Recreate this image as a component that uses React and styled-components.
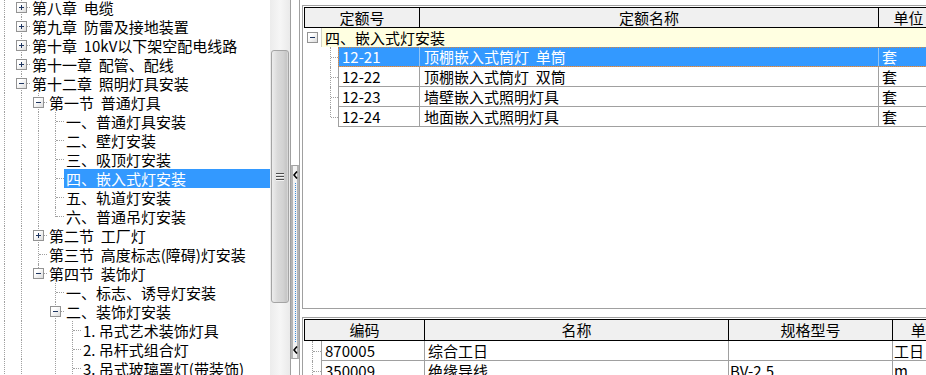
import React from 'react'
import styled, { createGlobalStyle, css } from 'styled-components'

const GlobalStyle = createGlobalStyle`
  html, body {
    margin: 0;
    padding: 0;
    background: #fff;
  }
  body {
    font-family: "Noto Sans CJK SC", "Noto Sans", sans-serif;
    font-size: 15px;
    color: #000;
    overflow: hidden;
  }
`

const tree = [
  { level: 1, text: '第八章  电缆', box: 'plus' },
  { level: 1, text: '第九章  防雷及接地装置', box: 'plus' },
  { level: 1, text: '第十章  10kV以下架空配电线路', box: 'plus' },
  { level: 1, text: '第十一章  配管、配线', box: 'plus' },
  { level: 1, text: '第十二章  照明灯具安装', box: 'minus' },
  { level: 2, text: '第一节  普通灯具', box: 'minus' },
  { level: 3, text: '一、普通灯具安装' },
  { level: 3, text: '二、壁灯安装' },
  { level: 3, text: '三、吸顶灯安装' },
  { level: 3, text: '四、嵌入式灯安装', selected: true },
  { level: 3, text: '五、轨道灯安装' },
  { level: 3, text: '六、普通吊灯安装' },
  { level: 2, text: '第二节  工厂灯', box: 'plus' },
  { level: 2, text: '第三节  高度标志(障碍)灯安装' },
  { level: 2, text: '第四节  装饰灯', box: 'minus' },
  { level: 3, text: '一、标志、诱导灯安装' },
  { level: 3, text: '二、装饰灯安装', box: 'minus' },
  { level: 4, text: '1. 吊式艺术装饰灯具' },
  { level: 4, text: '2. 吊杆式组合灯' },
  { level: 4, text: '3. 吊式玻璃罩灯(带装饰)' },
]

// levels that go on past the bottom of the visible list
const MORE_AFTER = { 0: true, 1: true, 2: false, 3: true, 4: true }

const hasLaterSibling = (i, level) => {
  for (let j = i + 1; j < tree.length; j++) {
    if (tree[j].level < level) return false
    if (tree[j].level === level) return true
  }
  return MORE_AFTER[level]
}

const quotaRows = [
  { code: '12-21', name: '顶棚嵌入式筒灯  单筒', unit: '套', selected: true },
  { code: '12-22', name: '顶棚嵌入式筒灯  双筒', unit: '套' },
  { code: '12-23', name: '墙壁嵌入式照明灯具', unit: '套' },
  { code: '12-24', name: '地面嵌入式照明灯具', unit: '套' },
]

const materialRows = [
  { code: '870005', name: '综合工日', spec: '', unit: '工日' },
  { code: '350009', name: '绝缘导线', spec: 'BV-2.5', unit: 'm' },
]

const Window = styled.div`
  display: flex;
  width: 926px;
  height: 375px;
  overflow: hidden;
  background: #fff;
`

/* ---------- tree ---------- */

const TreePane = styled.div`
  display: flex;
  flex: none;
  width: 290px;
  height: 100%;
`

const TreeView = styled.div`
  width: 270px;
  height: 100%;
  overflow: hidden;
  background: #fff;
`

const TreeList = styled.div`
  margin: -2px 0 0 -4px;
`

const TreeRow = styled.div`
  display: flex;
  height: 19px;
`

const dotted = '1px dotted #a0a0a0'

const Guide = styled.div`
  flex: none;
  width: 17px;
  position: relative;
  ${p => p.$line && css`
    &::before {
      content: '';
      position: absolute;
      left: 8px;
      top: 0;
      bottom: 0;
      border-left: ${dotted};
    }
  `}
`

const NodeCell = styled.div`
  flex: none;
  width: 17px;
  position: relative;
  &::before {
    content: '';
    position: absolute;
    left: 8px;
    top: 0;
    height: ${p => (p.$last ? '10px' : '19px')};
    border-left: ${dotted};
  }
  &::after {
    content: '';
    position: absolute;
    left: 9px;
    right: 0;
    top: 9px;
    border-top: ${dotted};
  }
`

const ExpandBox = styled.span`
  position: absolute;
  z-index: 1;
  left: ${p => p.$left ?? 3}px;
  top: ${p => p.$top ?? 4}px;
  width: 11px;
  height: 11px;
  box-sizing: border-box;
  border: 1px solid #939393;
  background: linear-gradient(135deg, #ffffff 30%, #dcdcdc);
  &::before {
    content: '';
    position: absolute;
    left: 2px;
    top: 4px;
    width: 5px;
    height: 1px;
    background: #1e3560;
  }
  ${p => p.$plus && css`
    &::after {
      content: '';
      position: absolute;
      left: 4px;
      top: 2px;
      width: 1px;
      height: 5px;
      background: #1e3560;
    }
  `}
`

const TreeLabel = styled.div`
  padding: 0 2px;
  line-height: 19px;
  white-space: pre;
  ${p => p.$selected && css`
    flex: 1;
    background: #3399ff;
    color: #fff;
  `}
`

/* ---------- tree scrollbar ---------- */

const ScrollTrack = styled.div`
  flex: none;
  width: 20px;
  height: 100%;
  box-sizing: border-box;
  padding-top: 50px;
  background: linear-gradient(to right, #ececec, #f6f6f6 50%, #eaeaea);
`

const Thumb = styled.div`
  height: 253px;
  margin: 0 1px 0 1px;
  box-sizing: border-box;
  border: 1px solid #a4a4a4;
  border-radius: 3px;
  background: linear-gradient(to right, #ededed, #dadada 35%, #d2d2d2 70%, #c6c6c6 90%, #dedede);
  display: flex;
  align-items: center;
  justify-content: center;
`

const Grip = styled.div`
  display: flex;
  flex-direction: column;
  gap: 2px;
  margin-left: -1px;
`

const GripLine = styled.div`
  width: 8px;
  height: 1px;
  background: #4e4e4e;
  box-shadow: 0 1px 0 #f4f4f4;
`

/* ---------- splitter ---------- */

const Splitter = styled.div`
  flex: none;
  width: 10px;
  height: 100%;
  box-sizing: border-box;
  border-left: 1px solid #a0a0a0;
  border-right: 1px solid #a0a0a0;
  background: #fff;
`

const SplitHandle = styled.div`
  margin-top: 165px;
  height: 194px;
  box-sizing: border-box;
  border-style: solid;
  border-width: 1px 2px;
  border-color: #a0a0a0 #b4b4b4;
  background: #f2f2f2;
  display: flex;
  flex-direction: column;
  align-items: center;
  padding: 5px 0 4px;
`

const BlueDots = styled.div`
  flex: 1;
  margin: 4px 0;
  border-left: 1px dotted #3a8de0;
`

const Chevron = () => (
  <svg width="5" height="8" viewBox="0 0 5 8">
    <polyline points="4,0.5 1,4 4,7.5" fill="none" stroke="#000" strokeWidth="1.6" />
  </svg>
)

/* ---------- right grids ---------- */

const RightPane = styled.div`
  flex: 1;
  min-width: 0;
  height: 100%;
  overflow: hidden;
  display: flex;
  flex-direction: column;
  padding-top: 5px;
  box-sizing: border-box;
`

const GridFrame = styled.div`
  margin-left: 2px;
  margin-top: ${p => p.$gap || 0}px;
  height: ${p => p.$height}px;
  flex: none;
  box-sizing: border-box;
  border: 1px solid #a0a0a0;
  border-right: none;
  padding: 1px 0 0 1px;
  overflow: hidden;
`

const HeaderRow = styled.div`
  display: flex;
  height: ${p => p.$height || 21}px;
  box-sizing: border-box;
  border: 1px solid #000;
  border-right: none;
  background: #f0f0f0;
  width: max-content;
`

const HeadCell = styled.div`
  flex: none;
  width: ${p => p.$w}px;
  box-sizing: border-box;
  border-right: 1px solid #000;
  text-align: center;
  line-height: ${p => (p.$lh || 19)}px;
  white-space: pre;
`

const GroupRow = styled.div`
  display: flex;
  height: 19px;
`

const GroupBoxSlot = styled.div`
  flex: none;
  width: 17px;
  position: relative;
`

const GroupLabel = styled.div`
  flex: 1;
  background: #ffffe1;
  border-left: 1px solid #d4d4c4;
  padding-left: 3px;
  line-height: 19px;
`

const DataRow = styled.div`
  display: flex;
  height: 20px;
  width: max-content;
`

const RowIndent = styled.div`
  flex: none;
  width: ${p => p.$w}px;
  position: relative;
  &::before {
    content: '';
    position: absolute;
    left: ${p => p.$x}px;
    top: 0;
    height: ${p => (p.$last ? '10px' : '20px')};
    border-left: ${dotted};
  }
  &::after {
    content: '';
    position: absolute;
    left: ${p => p.$x + 1}px;
    right: 0;
    top: 10px;
    border-top: ${dotted};
  }
`

const RowCells = styled.div`
  display: flex;
  box-sizing: border-box;
  border-bottom: 1px solid #a0a0a0;
  border-left: 1px solid #a0a0a0;
  ${p => p.$selected && css`
    background: #3399ff;
    color: #fff;
    outline: 1px dotted #d9823b;
    outline-offset: -1px;
  `}
`

const Cell = styled.div`
  flex: none;
  width: ${p => p.$w}px;
  box-sizing: border-box;
  border-right: 1px solid ${p => (p.$selected ? '#8ec4f8' : '#a0a0a0')};
  padding-left: ${p => p.$pad ?? 3}px;
  line-height: 19px;
  white-space: pre;
  overflow: hidden;
`

function Tree() {
  return (
    <TreeList>
      {tree.map((node, i) => {
        const guides = []
        for (let k = 0; k < node.level; k++) {
          guides.push(<Guide key={k} $line={hasLaterSibling(i, k)} />)
        }
        return (
          <TreeRow key={i}>
            {guides}
            <NodeCell $last={!hasLaterSibling(i, node.level)}>
              {node.box && <ExpandBox $plus={node.box === 'plus'} />}
            </NodeCell>
            <TreeLabel $selected={node.selected}>{node.text}</TreeLabel>
          </TreeRow>
        )
      })}
    </TreeList>
  )
}

function QuotaGrid() {
  return (
    <GridFrame $height={304}>
      <HeaderRow>
        <HeadCell $w={115}>定额号</HeadCell>
        <HeadCell $w={459}>定额名称</HeadCell>
        <HeadCell $w={60}>单位</HeadCell>
      </HeaderRow>
      <GroupRow>
        <GroupBoxSlot>
          <ExpandBox $left={3} $top={4} />
        </GroupBoxSlot>
        <GroupLabel>四、嵌入式灯安装</GroupLabel>
      </GroupRow>
      {quotaRows.map((r, i) => (
        <DataRow key={r.code}>
          <RowIndent $w={34} $x={26} $last={i === quotaRows.length - 1} />
          <RowCells $selected={r.selected}>
            <Cell $w={81} $selected={r.selected}>{r.code}</Cell>
            <Cell $w={459} $selected={r.selected} $pad={4}>{r.name}</Cell>
            <Cell $w={60} $selected={r.selected}>{r.unit}</Cell>
          </RowCells>
        </DataRow>
      ))}
    </GridFrame>
  )
}

function MaterialGrid() {
  return (
    <GridFrame $gap={8} $height={80}>
      <HeaderRow $height={22}>
        <HeadCell $w={120} $lh={20}>编码</HeadCell>
        <HeadCell $w={304} $lh={20}>名称</HeadCell>
        <HeadCell $w={164} $lh={20}>规格型号</HeadCell>
        <HeadCell $w={60} $lh={20}>{'  单位'}</HeadCell>
      </HeaderRow>
      {materialRows.map(r => (
        <DataRow key={r.code}>
          <RowIndent $w={17} $x={8} $last={false} />
          <RowCells>
            <Cell $w={103}>{r.code}</Cell>
            <Cell $w={304}>{r.name}</Cell>
            <Cell $w={164} $pad={1}>{r.spec}</Cell>
            <Cell $w={60} $pad={1}>{r.unit}</Cell>
          </RowCells>
        </DataRow>
      ))}
    </GridFrame>
  )
}

export default function App() {
  return (
    <>
      <GlobalStyle />
      <Window>
        <TreePane>
          <TreeView>
            <Tree />
          </TreeView>
          <ScrollTrack>
            <Thumb>
              <Grip>
                <GripLine />
                <GripLine />
                <GripLine />
              </Grip>
            </Thumb>
          </ScrollTrack>
        </TreePane>
        <Splitter>
          <SplitHandle>
            <Chevron />
            <BlueDots />
            <Chevron />
          </SplitHandle>
        </Splitter>
        <RightPane>
          <QuotaGrid />
          <MaterialGrid />
        </RightPane>
      </Window>
    </>
  )
}
